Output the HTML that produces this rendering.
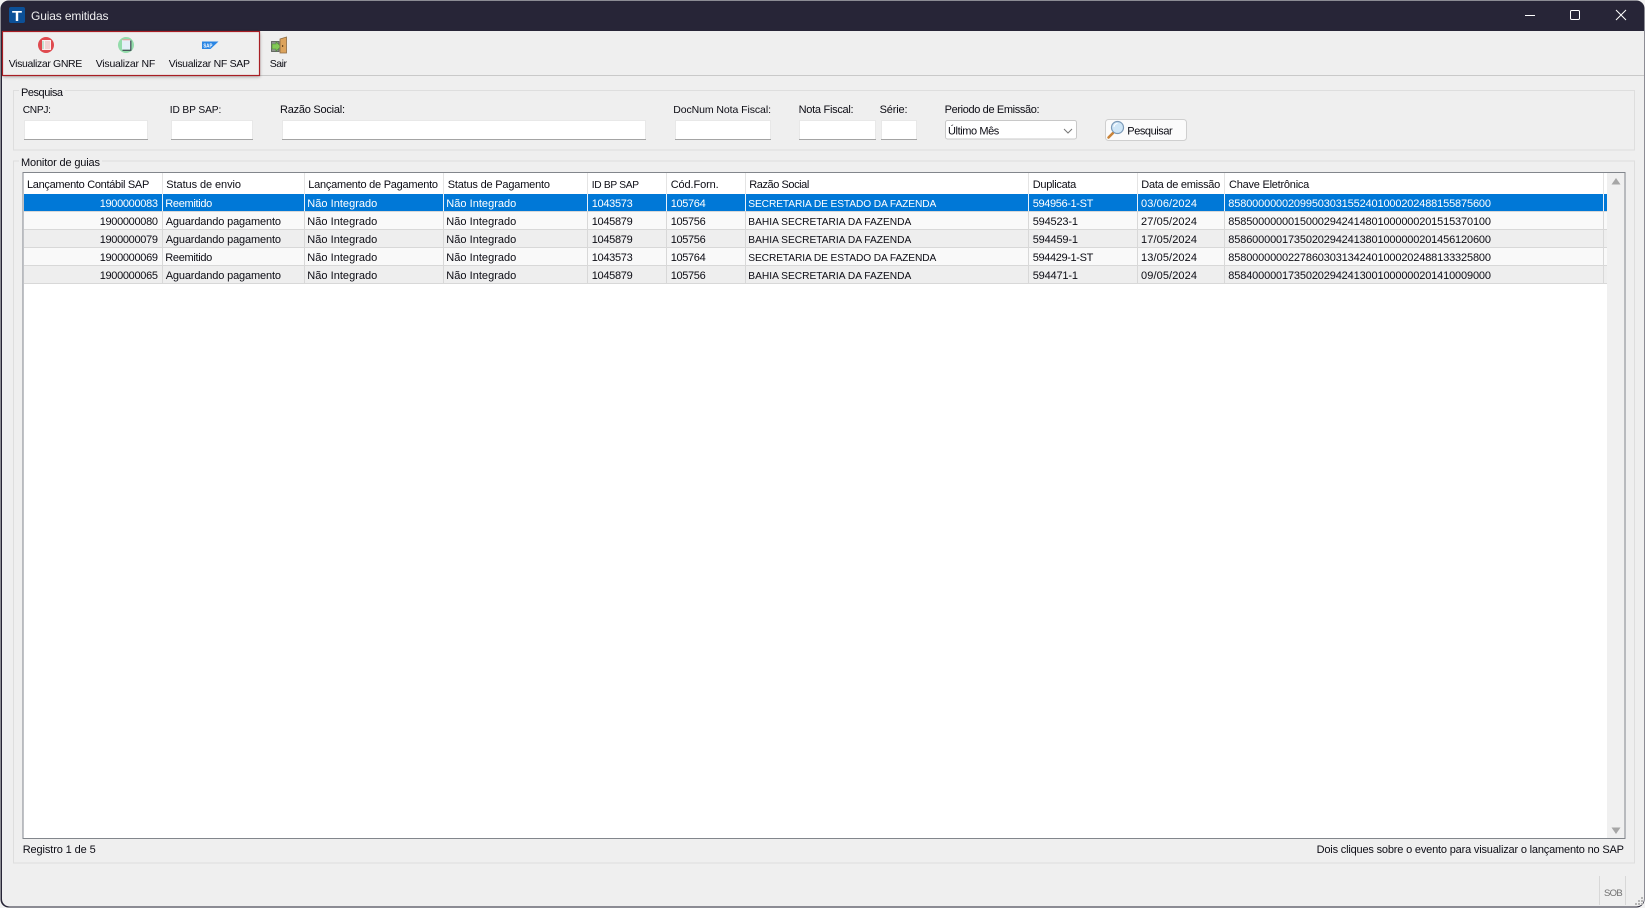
<!DOCTYPE html>
<html lang="pt"><head><meta charset="utf-8"><title>Guias emitidas</title>
<style>
html,body{margin:0;padding:0;background:#f2f2f2;overflow:hidden}
svg{display:block}
text{font-family:"Liberation Sans",sans-serif;font-size:11px;fill:#0c0c14}
text.u{font-size:10.2px}
text.t{font-size:10.5px}
.w text{fill:#fff}
</style></head><body>
<svg width="1645" height="908" viewBox="0 0 1645 908" xmlns="http://www.w3.org/2000/svg">
<defs><filter id="b" x="-5%" y="-20%" width="110%" height="140%"><feGaussianBlur stdDeviation="1.6"/></filter></defs>
<rect x="0.5" y="0.5" width="1644" height="907" rx="8" fill="#272537"/>
<path d="M2 31H1644V899a7.5 7.5 0 0 1-7.5 7.5H9.5A7.5 7.5 0 0 1 2 899Z" fill="#efefef"/>

<!-- title bar -->
<rect x="9" y="7" width="16" height="16" rx="2" fill="#0c5097"/>
<text x="12" y="21" textLength="10" lengthAdjust="spacingAndGlyphs" style="font-size:15px;font-weight:bold;fill:#fff">T</text>
<text x="31" y="20" textLength="77.5" style="font-size:12px;fill:#eeeeef">Guias emitidas</text>
<path d="M1525 15.5H1535" stroke="#fff" fill="none"/>
<rect x="1570.5" y="10.5" width="9" height="9" rx="1.2" stroke="#fff" fill="none"/>
<path d="M1616 10L1626 20M1626 10L1616 20" stroke="#fff" fill="none"/>

<!-- toolbar -->
<path d="M259 75.5H1644" stroke="#c9c9c9"/>
<rect x="3" y="33" width="257" height="44" fill="#000" opacity=".3" filter="url(#b)"/>
<rect x="2.5" y="31.5" width="257" height="44" fill="#efefef" stroke="#a81e24" stroke-width="1.2"/>
<circle cx="46" cy="45" r="8" fill="#df4a4f"/>
<rect x="42" y="40" width="9" height="10" rx=".5" fill="#fbeeee"/>
<path d="M43 41V49" stroke="#8fd0b0"/><path d="M45 42H50M45 44H50M45 46H50M45 48H50" stroke="#eab4b4"/>
<circle cx="126" cy="45" r="8" fill="#93dcaa"/>
<rect x="122" y="40" width="8.5" height="9.5" fill="#e4f0f7"/>
<path d="M122.5 39.8H130" stroke="#e99" stroke-width="1"/>
<path d="M130.8 40.5V50.3H122.5" stroke="#3d4650" stroke-width="1.2" fill="none"/>
<polygon points="202,41.5 218.5,41.5 210.5,49 202,49" fill="#2a86e4"/>
<text x="203.4" y="47.5" textLength="9" lengthAdjust="spacingAndGlyphs" style="font-size:5.4px;font-weight:bold;fill:#fff">SAP</text>
<rect x="271.5" y="41.5" width="7.5" height="10" fill="#8f948e" stroke="#4f544f" stroke-width=".8"/>
<polygon points="272,44 276,44 276,41.8 281,46.5 276,51.2 276,49 272,49" fill="#83c957" stroke="#4a8a35" stroke-width=".6"/>
<polygon points="280,39 286.5,37 286.5,53 280,53" fill="#dca35c" stroke="#8a6a42" stroke-width=".8"/>
<rect x="282" y="45" width="1.2" height="2" fill="#6b4a20"/>
<text class="t" x="8.7" y="67" textLength="73.6">Visualizar GNRE</text>
<text class="t" x="95.7" y="67" textLength="59.6">Visualizar NF</text>
<text class="t" x="168.7" y="67" textLength="81.3">Visualizar NF SAP</text>
<text class="t" x="269.7" y="67" textLength="17.3">Sair</text>

<!-- group Pesquisa -->
<rect x="13.5" y="90.5" width="1621" height="59.5" fill="none" stroke="#dedede"/>
<rect x="19" y="86" width="46" height="10" fill="#efefef"/>
<text x="21" y="96" textLength="42">Pesquisa</text>
<text class="u" x="22.7" y="113" textLength="28.3">CNPJ:</text>
<text class="u" x="169.7" y="113" textLength="51.6">ID BP SAP:</text>
<text x="280" y="113" textLength="65">Razão Social:</text>
<text class="t" x="673.2" y="113" textLength="97.8">DocNum Nota Fiscal:</text>
<text x="798.6" y="113" textLength="55">Nota Fiscal:</text>
<text x="879.6" y="113" textLength="27.9">Série:</text>
<text x="944.6" y="113" textLength="95">Periodo de Emissão:</text>
<g fill="#fff" stroke="#e8e8e8">
<rect x="24.5" y="120.5" width="123" height="19"/>
<rect x="171.5" y="120.5" width="81" height="19"/>
<rect x="282.5" y="120.5" width="363" height="19"/>
<rect x="675.5" y="120.5" width="95" height="19"/>
<rect x="799.5" y="120.5" width="76" height="19"/>
<rect x="881.5" y="120.5" width="35" height="19"/>
</g>
<g stroke="#a4a4a4">
<path d="M24 139.5H148M171 139.5H253M282 139.5H646M675 139.5H771M799 139.5H876M881 139.5H917"/>
</g>
<rect x="945.5" y="120.5" width="131" height="18.5" rx="2" fill="#fff" stroke="#c8c8c8"/>
<text x="948" y="134.3" textLength="51.3">Último Mês</text>
<path d="M1064 129L1068 133L1072 129" fill="none" stroke="#777"/>
<rect x="1105.5" y="119.5" width="81" height="21" rx="3" fill="#fbfbfb" stroke="#cfcfcf"/>
<path d="M1113 133L1108.5 137.5" stroke="#c9843a" stroke-width="2.6" stroke-linecap="round"/>
<circle cx="1117.5" cy="127.5" r="6" fill="#cfe6f7" stroke="#7c9ab8" stroke-width="1.2"/>
<path d="M1114 127a3.5 3.5 0 0 1 3.5-3.5" stroke="#fff" fill="none"/>
<text x="1127.3" y="134.7" textLength="45.4">Pesquisar</text>

<!-- group Monitor -->
<rect x="13.5" y="161" width="1621" height="702" fill="none" stroke="#dedede"/>
<rect x="19" y="157" width="83" height="10" fill="#efefef"/>
<text x="21" y="166" textLength="79">Monitor de guias</text>

<!-- table -->
<rect x="23" y="172.5" width="1602" height="666" fill="#fff" stroke="#82868c"/>
<rect x="1607" y="173" width="17.5" height="665" fill="#f0f0f0"/>
<polygon points="1616,178 1620.5,184.5 1611.5,184.5" fill="#a6a6a6"/>
<polygon points="1616,834 1620.5,827.5 1611.5,827.5" fill="#a6a6a6"/>
<rect x="24" y="194" width="1583" height="17" fill="#0078d7"/>
<rect x="24" y="212" width="1583" height="17" fill="#f9f9f9"/>
<rect x="24" y="230" width="1583" height="17" fill="#eeeeee"/>
<rect x="24" y="248" width="1583" height="17" fill="#f9f9f9"/>
<rect x="24" y="266" width="1583" height="17" fill="#eeeeee"/>
<path d="M24 211.5H1607M24 229.5H1607M24 247.5H1607M24 265.5H1607M24 283.5H1607" stroke="#d8d8d8"/>
<path d="M162.5 173V194M304.5 173V194M443.5 173V194M587.5 173V194M666.5 173V194M745.5 173V194M1028.5 173V194M1137.5 173V194M1224.5 173V194M1603.5 173V194" stroke="#e4e4e4"/>
<path d="M162.5 194V211M304.5 194V211M443.5 194V211M587.5 194V211M666.5 194V211M745.5 194V211M1028.5 194V211M1137.5 194V211M1224.5 194V211M1603.5 194V211" stroke="#e8f2fb"/>
<path d="M162.5 212V284M304.5 212V284M443.5 212V284M587.5 212V284M666.5 212V284M745.5 212V284M1028.5 212V284M1137.5 212V284M1224.5 212V284M1603.5 212V284" stroke="#d8d8d8"/>

<text x="27" y="188" textLength="122.3">Lançamento Contábil SAP</text>
<text x="166.3" y="188" textLength="74.7">Status de envio</text>
<text x="308.3" y="188" textLength="129.7">Lançamento de Pagamento</text>
<text x="447.7" y="188" textLength="102.3">Status de Pagamento</text>
<text class="u" x="591.7" y="188" textLength="47.3">ID BP SAP</text>
<text x="670.7" y="188" textLength="48">Cód.Forn.</text>
<text x="749.3" y="188" textLength="60">Razão Social</text>
<text x="1032.7" y="188" textLength="43.6">Duplicata</text>
<text x="1141.3" y="188" textLength="79">Data de emissão</text>
<text x="1229" y="188" textLength="80.3">Chave Eletrônica</text>

<g class="w">
<text x="99.7" y="207" textLength="58.3">1900000083</text>
<text x="165.3" y="207" textLength="47">Reemitido</text>
<text x="307.3" y="207" textLength="70">Não Integrado</text>
<text x="446.3" y="207" textLength="70">Não Integrado</text>
<text x="591.7" y="207" textLength="41">1043573</text>
<text x="670.7" y="207" textLength="35">105764</text>
<text class="u" x="748.3" y="207" textLength="188">SECRETARIA DE ESTADO DA FAZENDA</text>
<text x="1032.7" y="207" textLength="60.6">594956-1-ST</text>
<text x="1141" y="207" textLength="56">03/06/2024</text>
<text x="1228.3" y="207" textLength="262.7">85800000002099503031552401000202488155875600</text>
</g>

<text x="99.7" y="225" textLength="58.3">1900000080</text>
<text x="165.7" y="225" textLength="115.3">Aguardando pagamento</text>
<text x="307.3" y="225" textLength="70">Não Integrado</text>
<text x="446.3" y="225" textLength="70">Não Integrado</text>
<text x="591.7" y="225" textLength="41">1045879</text>
<text x="670.7" y="225" textLength="35">105756</text>
<text class="u" x="748.3" y="225" textLength="163">BAHIA SECRETARIA DA FAZENDA</text>
<text x="1032.7" y="225" textLength="45.3">594523-1</text>
<text x="1141" y="225" textLength="56">27/05/2024</text>
<text x="1228.3" y="225" textLength="262.7">85850000000150002942414801000000201515370100</text>

<text x="99.7" y="243" textLength="58.3">1900000079</text>
<text x="165.7" y="243" textLength="115.3">Aguardando pagamento</text>
<text x="307.3" y="243" textLength="70">Não Integrado</text>
<text x="446.3" y="243" textLength="70">Não Integrado</text>
<text x="591.7" y="243" textLength="41">1045879</text>
<text x="670.7" y="243" textLength="35">105756</text>
<text class="u" x="748.3" y="243" textLength="163">BAHIA SECRETARIA DA FAZENDA</text>
<text x="1032.7" y="243" textLength="45.3">594459-1</text>
<text x="1141" y="243" textLength="56">17/05/2024</text>
<text x="1228.3" y="243" textLength="262.7">85860000017350202942413801000000201456120600</text>

<text x="99.7" y="261" textLength="58.3">1900000069</text>
<text x="165.3" y="261" textLength="47">Reemitido</text>
<text x="307.3" y="261" textLength="70">Não Integrado</text>
<text x="446.3" y="261" textLength="70">Não Integrado</text>
<text x="591.7" y="261" textLength="41">1043573</text>
<text x="670.7" y="261" textLength="35">105764</text>
<text class="u" x="748.3" y="261" textLength="188">SECRETARIA DE ESTADO DA FAZENDA</text>
<text x="1032.7" y="261" textLength="60.6">594429-1-ST</text>
<text x="1141" y="261" textLength="56">13/05/2024</text>
<text x="1228.3" y="261" textLength="262.7">85800000002278603031342401000202488133325800</text>

<text x="99.7" y="279" textLength="58.3">1900000065</text>
<text x="165.7" y="279" textLength="115.3">Aguardando pagamento</text>
<text x="307.3" y="279" textLength="70">Não Integrado</text>
<text x="446.3" y="279" textLength="70">Não Integrado</text>
<text x="591.7" y="279" textLength="41">1045879</text>
<text x="670.7" y="279" textLength="35">105756</text>
<text class="u" x="748.3" y="279" textLength="163">BAHIA SECRETARIA DA FAZENDA</text>
<text x="1032.7" y="279" textLength="45.3">594471-1</text>
<text x="1141" y="279" textLength="56">09/05/2024</text>
<text x="1228.3" y="279" textLength="262.7">85840000017350202942413001000000201410009000</text>

<!-- status -->
<text x="22.7" y="853" textLength="73">Registro 1 de 5</text>
<text x="1316.6" y="853" textLength="307.4">Dois cliques sobre o evento para visualizar o lançamento no SAP</text>
<path d="M1599.5 876V905M1625.5 876V905" stroke="#d8d8d8"/>
<text x="1604" y="896" textLength="18.7" style="font-size:9.5px;fill:#707070">SOB</text>
<g fill="#b4b4b4">
<rect x="1641" y="897" width="2" height="2"/>
<rect x="1638" y="900" width="2" height="2"/><rect x="1641" y="900" width="2" height="2"/>
<rect x="1635" y="903" width="2" height="2"/><rect x="1638" y="903" width="2" height="2"/><rect x="1641" y="903" width="2" height="2"/>
</g>
</svg>
</body></html>
